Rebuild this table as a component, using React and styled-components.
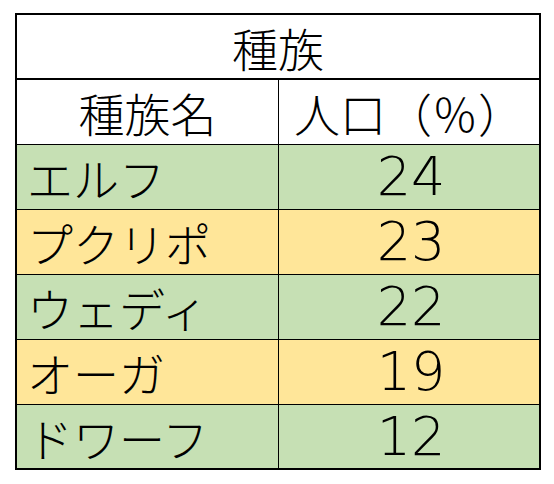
import React from 'react';
import styled, { createGlobalStyle } from 'styled-components';

const GlobalStyle = createGlobalStyle`
	body {
		margin: 0;
		background: #ffffff;
		font-family: "Noto Sans CJK JP", "Noto Sans", sans-serif;
	}
`;

export const Page = styled.div`
	padding: 13px 0 0 15px;
`;

export const Sheet = styled.div`
	display: grid;
	grid-template-columns: 261px 260px;
	grid-template-rows: 64px 64px repeat(4, 64px) 63px;
	gap: 1px;
	width: 522px;
	padding: 2px;
	background-color: #000000;
`;

export const Title = styled.div`
	grid-column: 1 / span 2;
	margin-bottom: 1px;
	display: flex;
	align-items: center;
	justify-content: center;
	font-size: 46px;
	font-weight: 300;
	line-height: 1;
	color: #000000;
	background-color: #ffffff;
`;

export const Cell = styled.div`
	display: flex;
	align-items: center;
	justify-content: ${props => (props.$align === 'left' ? 'flex-start' : 'center')};
	padding-left: ${props => (props.$align === 'left' ? '10px' : '0')};
	overflow: hidden;
	font-size: 46px;
	font-weight: 300;
	line-height: 1;
	color: #000000;
	background-color: ${props => props.$bg || '#ffffff'};
`;

export const Num = styled.span`
	font-family: "DejaVu Sans", "Noto Sans", sans-serif;
	font-size: 54px;
	font-weight: 300;
	line-height: 1;
	padding-left: 4px;
`;

const dataList = [
	{ id: 1, name: 'エルフ', pop: 24 },
	{ id: 2, name: 'プクリポ', pop: 23 },
	{ id: 3, name: 'ウェディ', pop: 22 },
	{ id: 4, name: 'オーガ', pop: 19 },
	{ id: 5, name: 'ドワーフ', pop: 12 },
];

const App = () => {
	return (
		<>
			<GlobalStyle />
			<Page>
				<Sheet>
					<Title>種族</Title>
					<Cell>種族名</Cell>
					<Cell>人口（％）</Cell>
					{dataList.map((data, i) => {
						const bg = i % 2 === 0 ? '#c6e0b4' : '#ffe699';
						return (
							<React.Fragment key={data.id}>
								<Cell $align="left" $bg={bg}>
									{data.name}
								</Cell>
								<Cell $bg={bg}>
									<Num>{data.pop}</Num>
								</Cell>
							</React.Fragment>
						);
					})}
				</Sheet>
			</Page>
		</>
	);
};

export default App;
